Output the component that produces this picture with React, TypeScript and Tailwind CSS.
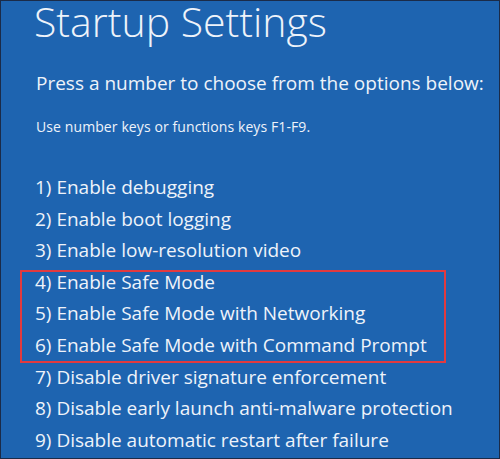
import React from "react";

const items = [
  "1) Enable debugging",
  "2) Enable boot logging",
  "3) Enable low-resolution video",
  "4) Enable Safe Mode",
  "5) Enable Safe Mode with Networking",
  "6) Enable Safe Mode with Command Prompt",
  "7) Disable driver signature enforcement",
  "8) Disable early launch anti-malware protection",
  "9) Disable automatic restart after failure",
];

function Row({ t }: { t: string }) {
  return <div className="text-[19px] leading-[31.6px] whitespace-nowrap">{t}</div>;
}

export default function App() {
  return (
    <div
      className="w-[500px] h-[459px] overflow-hidden border border-[#1b2b48] bg-[#1e64b0] text-[#eef3fa]"
      style={{ fontFamily: '"Open Sans", "Noto Sans", sans-serif' }}
    >
      <div className="pl-[33px]">
        <h1 className="text-[41px] leading-[40px] font-light whitespace-nowrap">
          Startup Settings
        </h1>
        <p className="text-[19px] leading-[24px] mt-[30px] pl-[2px] whitespace-nowrap">
          Press a number to choose from the options below:
        </p>
        <p className="text-[14px] leading-[18px] mt-[23px] pl-[2px] tracking-[0.1px] whitespace-nowrap">
          Use number keys or functions keys F1-F9.
        </p>
      </div>
      <div className="mt-[36px] pl-[34px] flex flex-col">
        {items.slice(0, 3).map((t) => (
          <Row key={t} t={t} />
        ))}
        <div className="relative">
          {items.slice(3, 6).map((t) => (
            <Row key={t} t={t} />
          ))}
          <div className="absolute left-[-15px] w-[426px] top-[3px] bottom-[-1px] border-2 border-[#e23a3f]" />
        </div>
        {items.slice(6).map((t) => (
          <Row key={t} t={t} />
        ))}
      </div>
    </div>
  );
}
